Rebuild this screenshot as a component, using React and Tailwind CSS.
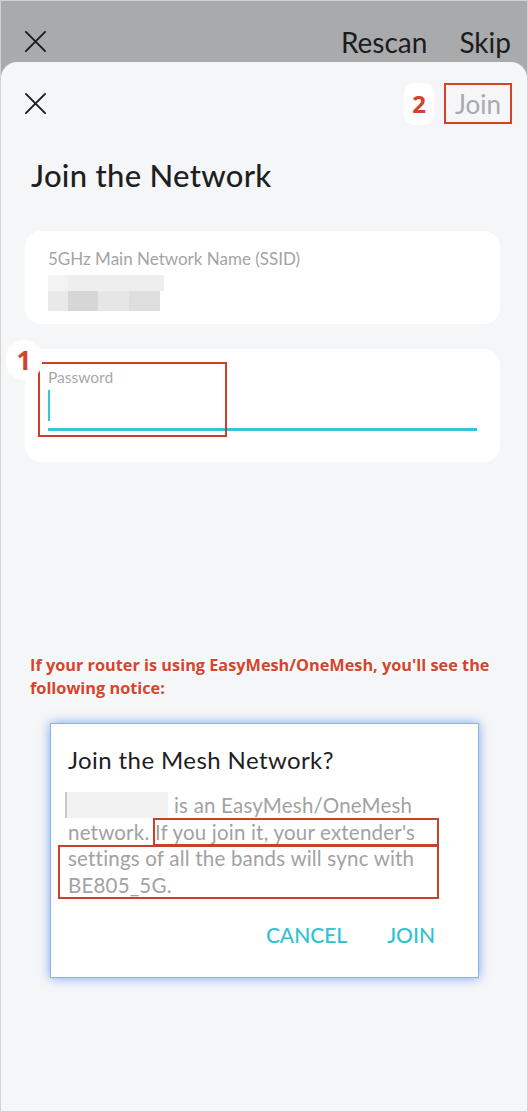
import React from 'react';

const CloseIcon = ({ size = 24 }) => (
  <svg width={size} height={size} viewBox="0 0 24 24" fill="none" stroke="#1c1c1c" strokeWidth="2" strokeLinecap="round">
    <path d="M2 2 L22 22 M22 2 L2 22" />
  </svg>
);

const App = () => {
  return (
    <div className="w-[528px] h-[1112px] flex flex-col bg-[#a9aaac] border border-[#d2d2d2] overflow-hidden font-['Lato',sans-serif]">
      {/* behind-the-sheet bar */}
      <div className="h-[61px] flex items-center pl-[23px] pr-[16px] pt-[20px]">
        <CloseIcon size={23} />
        <div className="ml-auto flex items-center gap-[32px] text-[28px] leading-none text-[#1c1c1c]">
          <span>Rescan</span>
          <span>Skip</span>
        </div>
      </div>

      {/* sheet */}
      <div className="flex-1 bg-[#f5f6f8] rounded-t-[16px] flex flex-col">
        <div className="h-[41px] mt-[21px] flex items-center pl-[23px] pr-[15px]">
          <CloseIcon size={23} />
          <div className="ml-auto flex items-center">
            <div className="w-[30px] h-[42px] bg-white rounded-[10px] flex items-center justify-center text-[24px] font-bold text-[#d6412a] font-['Open_Sans',sans-serif]">
              2
            </div>
            <div className="ml-[10px] w-[68px] h-[41px] border-2 border-[#d6412a] flex items-center justify-center text-[26px] leading-none text-[#a9a9a9]">
              Join
            </div>
          </div>
        </div>

        <h1 className="mt-[33px] ml-[30px] text-[31px] leading-[36px] tracking-[0.3px] font-medium text-[#1e1e1e]">Join the Network</h1>

        <div className="mt-[38px] mx-[24px] w-[475px] h-[93px] bg-white rounded-[16px] px-[23px] pt-[18px]">
          <div className="text-[17px] leading-[20px] text-[#a4a4a4]">5GHz Main Network Name (SSID)</div>
          <div className="mt-[6px] flex flex-col w-[118px]">
            <div className="flex h-[16px]">
              <div className="w-[20px] bg-[#f3f3f3]" />
              <div className="w-[96px] bg-[#eeeeee]" />
            </div>
            <div className="flex h-[20px]">
              <div className="w-[20px] bg-[#e9e9e9]" />
              <div className="w-[30px] bg-[#d6d6d6]" />
              <div className="w-[31px] bg-[#e6e6e6]" />
              <div className="w-[31px] bg-[#dedede]" />
            </div>
          </div>
        </div>

        <div className="relative mt-[25px] mx-[24px] w-[475px] h-[113px] bg-white rounded-[16px] px-[23px] pt-[18px]">
          <div className="text-[15.5px] leading-[20px] text-[#a8a8a8]">Password</div>
          <div className="mt-[3px] w-[2px] h-[31px] bg-[#35c5d3]" />
          <div className="mt-[7px] w-[429px] h-[3px] bg-[#35c5d3]" />
          {/* annotation */}
          <div className="absolute left-[13px] top-[13px] w-[189px] h-[75px] border-2 border-[#c9412b]" />
          <div className="absolute left-[-19px] top-[-9px] w-[36px] h-[40px] rounded-full bg-white flex items-center justify-center text-[26px] font-bold text-[#d6412a] font-['Open_Sans',sans-serif]">
            1
          </div>
        </div>

        <p className="mt-[192px] ml-[29px] text-[16.3px] leading-[23px] font-bold text-[#d8442b] font-['Open_Sans',sans-serif] [text-shadow:0_0_4px_#fff,0_0_6px_#fff]">
          If your router is using EasyMesh/OneMesh, you'll see the<br />following notice:
        </p>

        <div className="mt-[23px] ml-[49px] w-[429px] h-[255px] bg-white border border-[#8db2f2] shadow-[0_0_10px_rgba(70,130,240,0.7)] pl-[17px] pr-[20px] pt-[22px]">
          <h2 className="text-[24px] leading-[28px] tracking-[0.4px] text-[#1e1e1e]">Join the Mesh Network?</h2>
          <div className="relative mt-[18px] text-[20.5px] leading-[26.5px] tracking-[0.2px] text-[#a2a2a2]">
            <div className="flex items-center">
              <span className="inline-block w-[103px] h-[26px] -ml-[3px] mr-[6px] bg-[#f2f2f2] border-l-2 border-[#c8c8cc]" />
              <span>is an EasyMesh/OneMesh</span>
            </div>
            <div>network. If you join it, your extender's</div>
            <div>settings of all the bands will sync with</div>
            <div>BE805_5G.</div>
            <div className="absolute left-[85px] top-[26px] w-[286px] h-[28px] border-2 border-[#c9412b]" />
            <div className="absolute left-[-10px] top-[53px] w-[381px] h-[54px] border-2 border-[#c9412b]" />
          </div>
          <div className="mt-[26px] flex justify-end gap-[40px] pr-[23px] text-[21px] leading-none font-medium text-[#2fc3d1]">
            <span>CANCEL</span>
            <span>JOIN</span>
          </div>
        </div>
      </div>
    </div>
  );
};

export default App;
